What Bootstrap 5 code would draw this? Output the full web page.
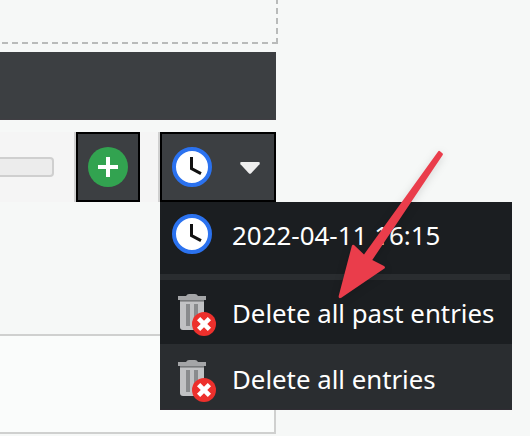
<!DOCTYPE html>
<html lang="en">
<head>
<meta charset="utf-8">
<meta name="viewport" content="width=device-width, initial-scale=1">
<title>Entries</title>
<link href="https://cdn.jsdelivr.net/npm/bootstrap@5.3.0/dist/css/bootstrap.min.css" rel="stylesheet">
<style>
body{width:530px;height:436px;background:#f6f8f7;font-family:"Noto Sans",sans-serif}
.workspace{width:278px}
.drop-zone{height:44px;background:
 repeating-linear-gradient(90deg,#b9bbba 0 6px,transparent 6px 10px) 2px 42px/276px 2px no-repeat,
 repeating-linear-gradient(0deg,#b9bbba 0 6px,transparent 6px 10px) 276px 0/2px 44px no-repeat}
.title-strip{width:276px;height:68px;margin-top:8px;background:#3c3f42;border-bottom:1px solid #403e43}
.tools{width:276px;height:70px;margin-top:12px;background:#f5f5f5}
.tool-cell{width:76px;border-right:2px solid #d0d0d0}
.gap-cell{width:20px;border-right:2px solid #d0d0d0}
.tool-input{width:54px;height:20px;background:#ececec;border:2px solid #cfcfcf;border-left:0;border-radius:0 4px 4px 0}
.tool-btn{background:#3c3f42;border:2px solid #000;border-radius:0;padding:0;height:70px}
.add-btn{width:64px}
.history-btn{width:116px;padding-left:10px}
.track{width:276px;height:100px;margin-top:132px;background:#fafcfb;border:2px solid #cfd0cf;border-left:0}
.history-menu{left:160px;top:202px;width:352px;height:208px;background:#1b1e21;border:0;border-radius:0;padding:0;font-size:25.8px;line-height:36px;overflow:hidden}
.history-menu .dropdown-item{color:#fff;padding:0 0 0 12px;height:66px}
.history-menu .stamp{height:72px;padding-bottom:8px}
.history-menu .stamp .label{padding-top:2px;font-size:25.95px}
.history-menu .rule{width:350px;height:6px;background:#2a2d30}
.history-menu .past{height:64px;padding-top:4px}
.history-menu .past .label,.history-menu .hovered .label{margin-left:16px;margin-top:-2px}
.history-menu .hovered{background:#2a2d30;border-bottom:1px solid #302c33;padding-top:7px}
.history-menu .label{margin-left:20px;white-space:nowrap}
.pointer{left:330px;top:140px;z-index:1100;filter:drop-shadow(0 2px 4px rgba(0,0,0,.14))}
</style>
<script src="https://cdn.jsdelivr.net/npm/bootstrap@5.3.0/dist/js/bootstrap.bundle.min.js"></script>
</head>
<body class="position-relative overflow-hidden">
<svg class="d-none" xmlns="http://www.w3.org/2000/svg">
 <symbol id="clock" viewBox="0 0 40 40"><circle cx="20" cy="20" r="18" fill="#fff" stroke="#2b72ef" stroke-width="4"/><path d="M19.5 10v11.7l9.5 5" fill="none" stroke="#111" stroke-width="3"/></symbol>
 <symbol id="trash" viewBox="0 0 44 44">
  <path d="M8 9h24v26a3 3 0 0 1-3 3H11a3 3 0 0 1-3-3z" fill="#c1c2c4"/>
  <path d="M8 8h24v1.6H8z" fill="#77797b"/>
  <path d="M14 12h4v22h-4zM22 12h4v22h-4z" fill="#898b8d"/>
  <path d="M6 4h8q1-2 3-2h6q2 0 3 2h8v4H6z" fill="#a4a5a7"/>
  <circle cx="32" cy="32" r="12" fill="#ed302c"/>
  <path d="M26.6 26.6l10.8 10.8M37.4 26.6L26.6 37.4" stroke="#fff" stroke-width="4.6"/>
 </symbol>
</svg>
<main class="workspace">
 <section class="drop-zone"></section>
 <header class="title-strip"></header>
 <div class="tools d-flex">
  <div class="tool-cell d-flex align-items-center"><div class="tool-input"></div></div>
  <button class="btn tool-btn add-btn d-flex align-items-center justify-content-center" aria-label="Add">
   <svg width="40" height="40" viewBox="0 0 40 40"><circle cx="20" cy="20" r="20" fill="#32a350"/><path d="M20 10v20M10 20h20" stroke="#fff" stroke-width="4"/></svg>
  </button>
  <div class="gap-cell"></div>
  <button class="btn tool-btn history-btn d-flex align-items-center" aria-label="History">
   <svg width="40" height="40"><use href="#clock"/></svg>
   <svg class="ms-auto" width="34" height="20" viewBox="0 0 34 20"><path d="M1.5 5h17q2 0 1 2.3l-8.3 8.9q-1.2 1.1-2.4 0L.5 7.3Q-.5 5 1.5 5z" fill="#eee"/></svg>
  </button>
 </div>
 <section class="track"></section>
</main>
<div class="dropdown-menu history-menu show position-absolute">
 <a class="dropdown-item stamp d-flex align-items-center"><svg width="40" height="40"><use href="#clock"/></svg><span class="label">2022-04-11 16:15</span></a>
 <div class="rule"></div>
 <a class="dropdown-item past d-flex align-items-center"><svg width="44" height="44"><use href="#trash"/></svg><span class="label">Delete all past entries</span></a>
 <a class="dropdown-item hovered d-flex align-items-center"><svg width="44" height="44"><use href="#trash"/></svg><span class="label">Delete all entries</span></a>
</div>
<svg class="pointer position-absolute" width="130" height="170" viewBox="0 0 130 170"><path d="M108.3 11.2L34 114.5 24 105q-1.5-1-2.2 1L8.7 156q-.4 3 2.6 1.8L54 128.8q2-1.3 0-2.8L42.3 120 112.7 15q.6-1-.3-1.7L109.7 11q-.9-.6-1.4.2z" fill="#ea3d4b"/></svg>
</body>
</html>
